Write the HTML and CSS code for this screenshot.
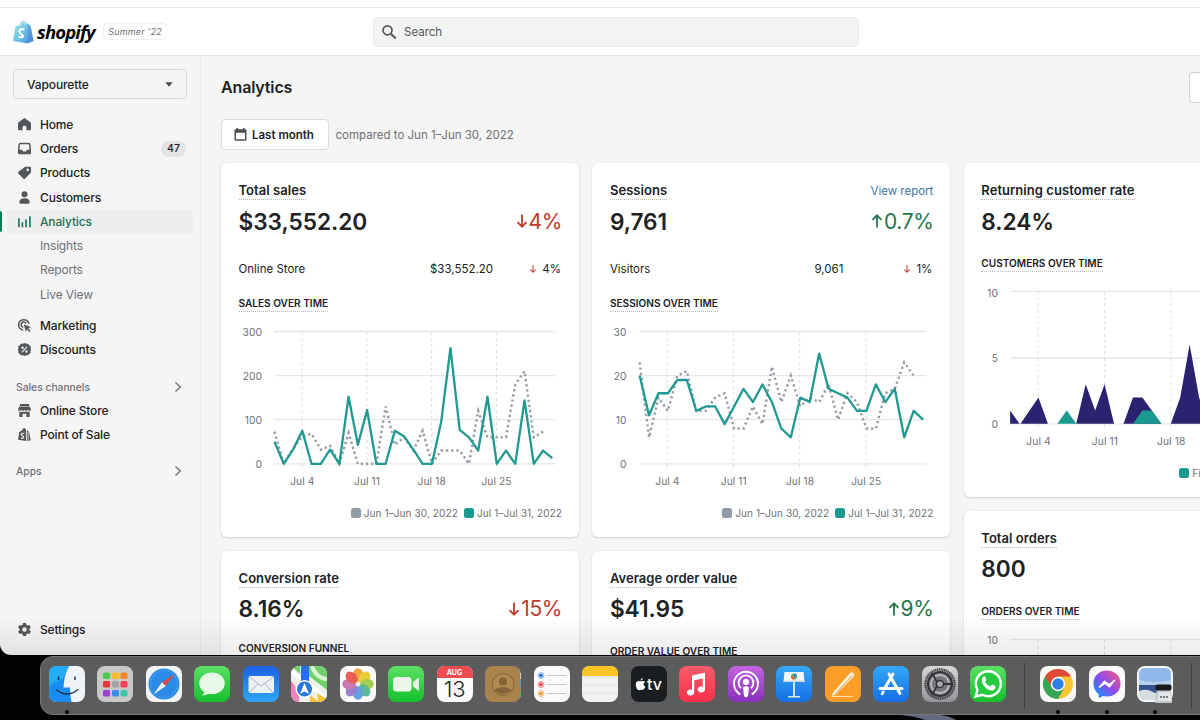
FILE: index.html
```html
<!DOCTYPE html>
<html lang="en">
<head>
<meta charset="utf-8">
<title>Vapourette · Analytics · Shopify</title>
<link rel="stylesheet" href="styles.css">
</head>
<body>
<div class="window">
  <div class="tabstrip"></div>
  <header class="topbar">
    <div class="brand">
      <svg class="bag" viewBox="0 0 21 24">
        <defs><linearGradient id="bagg" x1="0" y1="0" x2="1" y2="1"><stop offset="0" stop-color="#9be6cf"/><stop offset=".5" stop-color="#6ec3e6"/><stop offset="1" stop-color="#4a80d8"/></linearGradient></defs>
        <path d="M2.500 6.500 6 5.500C7 2.500 9 1 10.500 1c1.300 0 2 1 2.300 2.500L15 3.300l2.500 2.500L20.500 21 14.500 23.500 0 21z" fill="url(#bagg)"/>
        <path d="M14.800 4v19.300l5.700-2.300-3-15.200-1.500-.2z" fill="#4a8ad6" opacity=".5"/>
        <path d="M7.500 6c.5-2 1.700-3.300 2.800-3.500 1 0 1.300 1.500 1.300 3" fill="none" stroke="#c9f3ee" stroke-width=".8"/>
        <path d="M11.300 9.600c-2.500-1.300-5-.3-5 1.900 0 2.600 3.600 2.500 3.600 4.600 0 1.800-2.400 1.800-4.300.5" fill="none" stroke="#fff" stroke-width="2.200"/>
      </svg>
      <span class="wordmark">shopify</span>
      <span class="edition">Summer ’22</span>
    </div>
    <div class="search">
      <svg class="search-icon" viewBox="0 0 16 16"><circle cx="6.500" cy="6.300" r="4.500" fill="none" stroke="#55585b" stroke-width="1.700"/><path d="m9.800 9.700 5 4.800" stroke="#55585b" stroke-width="2"/></svg>
      <span>Search</span>
    </div>
  </header>
  <div class="body">
    <aside class="sidebar">
      <div class="store"><span>Vapourette</span><svg class="caret" viewBox="0 0 8 5"><path d="M.3.3h7.400L4 4.700z" fill="#4a4d50"/></svg></div>
      <nav class="nav">
        <a class="item"><svg class="ico" viewBox="0 0 20 20"><path d="M10 0 19 6.500Q20 7.300 20 8.500V17q0 2-2 2h-5v-5q0-2-3-2t-3 2v5H2q-2 0-2-2V8.500Q0 7.300 1 6.500z"/></svg><span>Home</span></a>
        <a class="item"><svg class="ico" viewBox="0 0 20 20"><path fill-rule="evenodd" d="M4 1h12q3 0 3.300 3L20 12v5q0 2-2 2H2q-2 0-2-2v-5L.7 4Q1 1 4 1zm0 2.500q-1 0-1.200 1L2.500 12H6l2 2.500h4l2-2.500h3.500l-.3-7.500q-.2-1-1.200-1z"/></svg><span>Orders</span><b class="badge">47</b></a>
        <a class="item"><svg class="ico" viewBox="0 0 20 20"><path fill-rule="evenodd" d="M11 1h7q2 0 2 2v7L11 19.300q-1.500 1.200-3 0L.8 12q-1.500-1.500 0-3zm4 3a2 2 0 1 0 .1 0z"/></svg><span>Products</span></a>
        <a class="item"><svg class="ico" viewBox="0 0 20 20"><circle cx="10" cy="5" r="4.600"/><path d="M2 17q0-6 8-6t8 6q0 2.500-2 2.500H4q-2 0-2-2.500z"/></svg><span>Customers</span></a>
        <a class="item active"><svg class="ico" viewBox="0 0 20 20"><path d="M0 5h2.600v14H0zM5.500 11h2.600v8H5.500zM11 7h2.600v12H11zM17 2h2.600v17H17z"/></svg><span>Analytics</span></a>
        <a class="item sub"><span>Insights</span></a>
        <a class="item sub"><span>Reports</span></a>
        <a class="item sub"><span>Live View</span></a>
        <a class="item gap"><svg class="ico" viewBox="0 0 20 20"><g fill="none" stroke="#54575a" stroke-width="2.400"><path d="M16.800 7.500A8 8 0 1 0 8 17"/><path d="M12.500 7A4 4 0 1 0 8 12.500"/></g><path d="m9 8 11 4.500-4.500 1.800 4 4-1.700 1.600-4-4L12 20z"/></svg><span>Marketing</span></a>
        <a class="item"><svg class="ico" viewBox="0 0 20 20"><path d="m10 0 2.500 1.300 3-.3 1.500 2.300 2.500 1.500L19.300 8l.9 2-.9 2.500.2 3L17 17l-1.500 2-3-.3L10 20l-2.500-1.300-3 .3L3 17 .5 15.500l.2-3L-.2 10l.9-2-.2-3.200L3 3.300 4.500 1l3 .3z"/><g stroke="#f5f5f5" stroke-width="1.700"><path d="m6 14.500 8-9"/><circle cx="7" cy="7.300" r="1" fill="#f5f5f5"/><circle cx="13" cy="13" r="1" fill="#f5f5f5"/></g></svg><span>Discounts</span></a>
        <div class="group"><span>Sales channels</span><svg class="chev" viewBox="0 0 8 12"><path d="m1.500 1.500 4.700 4.500-4.700 4.500"/></svg></div>
        <a class="item chan"><svg class="ico" viewBox="0 0 20 20"><path d="M3 0h14v3H3zM2 4h16l2 4q0 2.500-2.500 2.500T15 8.500q0 2-2.500 2T10 8.500q0 2-2.500 2T5 8.500q0 2-2.500 2T0 8zM2 12h16v8h-5v-5H7v5H2z"/></svg><span>Online Store</span></a>
        <a class="item chan"><svg class="ico" viewBox="0 0 20 20"><path d="M2 6 6 4q1-4 4-4 2 0 2.500 4v16L0 18zM14 3l3 3 2.500 13-5.500 1z"/><path d="M9.800 8.500Q5.500 7 5 9.700q0 1.500 2.300 2.500 2.200 1.300 1 3Q7 16.500 4.500 15" fill="none" stroke="#f5f5f5" stroke-width="1.700"/><path d="M15.700 6v13" stroke="#f5f5f5" stroke-width="1"/></svg><span>Point of Sale</span></a>
        <div class="group"><span>Apps</span><svg class="chev" viewBox="0 0 8 12"><path d="m1.500 1.500 4.700 4.500-4.700 4.500"/></svg></div>
      </nav>
      <a class="item settings"><svg class="ico" viewBox="0 0 20 20"><path fill-rule="evenodd" d="M7.700 0h4.600l.7 3 1.500.8 3-.9 2.300 4L17.600 9v2l2.200 2.100-2.300 4-3-.9-1.500.8-.7 3H7.700l-.7-3-1.500-.8-3 .9-2.300-4L2.400 11V9L.2 6.900l2.300-4 3 .9L7 3zM10 6.500a3.500 3.500 0 1 0 .1 0z"/></svg><span>Settings</span></a>
    </aside>

    <main class="main">
      <div class="heading"><h1>Analytics</h1><div class="more"></div></div>
      <div class="filter">
        <div class="range"><svg class="cal" viewBox="0 0 13 13"><path fill-rule="evenodd" d="M2.500 0h1.600v1.300h4.800V0h1.600v1.300h.8q1.200 0 1.200 1.200v9q0 1.200-1.200 1.200H1.700Q.5 12.700.5 11.500v-9q0-1.200 1.200-1.200h.8zM2 4.800v6.400h9V4.800z" fill="#4c4f52"/></svg><span>Last month</span></div>
        <span class="compare">compared to Jun 1–Jun 30, 2022</span>
      </div>
      <div class="columns">
        <div class="col">
          <section class="card tall">
            <div class="row title"><h2>Total sales</h2></div>
            <div class="row value"><strong>$33,552.20</strong><span class="delta down"><svg class="arr" viewBox="0 0 12 14"><path d="M6 .5v12M1.500 8.200 6 12.700l4.500-4.500"/></svg>4%</span></div>
            <div class="row detail"><span>Online Store</span><span class="num">$33,552.20</span><span class="mini"><svg class="arr" viewBox="0 0 12 14"><path d="M6 .5v12M1.500 8.200 6 12.700l4.500-4.500"/></svg>4%</span></div>
            <div class="row caption"><h3>Sales over time</h3></div>
            <svg class="chart" viewBox="239 320 323 175">
              <path class="grid" d="M274 331.500h281M274 375.700h281M274 419.700h281M274 463.800h281"/>
              <path class="vgrid" d="M302.200 332v136M366.900 332v136M431.600 332v136M496.500 332v136"/>
              <g transform="translate(274.500 463.800) scale(9.260 -.441)">
                <polyline class="prev" points="0,73 1,0 2,35 3,62 4,68 5,32 6,41 7,0 8,70 9,0 10,0 11,0 12,130 13,43 14,60 15,30 16,75 17,0 18,30 19,30 20,30 21,0 22,120 23,60 24,60 25,60 26,180 27,210 28,60 29,73"/>
                <polyline class="cur" points="0,50 1,0 2,32 3,75 4,0 5,0 6,32 7,0 8,152 9,43 10,122 11,0 12,0 13,75 14,62 15,32 16,0 17,0 18,95 19,262 20,77 21,60 22,30 23,152 24,0 25,30 26,0 27,144 28,0 29,30 30,13"/>
              </g>
              <g class="ylab"><text x="262" y="336">300</text><text x="262" y="380">200</text><text x="262" y="424">100</text><text x="262" y="468">0</text></g>
              <g class="xlab"><text x="302.300" y="485">Jul 4</text><text x="367" y="485">Jul 11</text><text x="431.700" y="485">Jul 18</text><text x="496.500" y="485">Jul 25</text></g>
            </svg>
            <div class="legend"><span><i class="sw grey"></i>Jun 1–Jun 30, 2022</span><span><i class="sw teal"></i>Jul 1–Jul 31, 2022</span></div>
          </section>
          <section class="card">
            <div class="row title"><h2>Conversion rate</h2></div>
            <div class="row value"><strong>8.16%</strong><span class="delta down"><svg class="arr" viewBox="0 0 12 14"><path d="M6 .5v12M1.500 8.200 6 12.700l4.500-4.500"/></svg>15%</span></div>
            <div class="row caption funnel"><h3>Conversion funnel</h3></div>
          </section>
        </div>
        <div class="col">
          <section class="card tall">
            <div class="row title"><h2>Sessions</h2><a class="link">View report</a></div>
            <div class="row value"><strong>9,761</strong><span class="delta up"><svg class="arr" viewBox="0 0 12 14"><path d="M6 13.500v-12M1.500 5.800 6 1.300l4.500 4.500"/></svg>0.7%</span></div>
            <div class="row detail"><span>Visitors</span><span class="num n2">9,061</span><span class="mini"><svg class="arr" viewBox="0 0 12 14"><path d="M6 .5v12M1.500 8.200 6 12.700l4.500-4.500"/></svg>1%</span></div>
            <div class="row caption"><h3>Sessions over time</h3></div>
            <svg class="chart" viewBox="610.500 320 323 175">
              <path class="grid" d="M640 331.500h287M640 375.700h287M640 419.700h287M640 463.800h287"/>
              <path class="vgrid" d="M667.600 332v136M733.900 332v136M800.200 332v136M866.500 332v136"/>
              <g transform="translate(640.100 463.800) scale(9.450 -4.410)">
                <polyline class="prev" points="0,23 1,6 2,15 3,12 4,20 5,21 6,12 7,12 8,15 9,16 10,8 11,8 12,13 13,9 14,22 15,14 16,20 17,13 18,15 19,14 20,18 21,10 22,16 23,14 24,8 25,8 26,16 27,17 28,23 29,20"/>
                <polyline class="cur" points="0,20 1,11 2,16 3,16 4,19 5,19 6,12 7,13 8,13 9,9 10,13 11,17 12,14 13,18 14,14 15,8 16,6 17,15 18,14 19,25 20,17 21,16 22,15 23,12 24,12 25,18 26,14 27,17 28,6 29,12 30,10"/>
              </g>
              <g class="ylab"><text x="627" y="336">30</text><text x="627" y="380">20</text><text x="627" y="424">10</text><text x="627" y="468">0</text></g>
              <g class="xlab"><text x="667.900" y="485">Jul 4</text><text x="734.300" y="485">Jul 11</text><text x="800.500" y="485">Jul 18</text><text x="866.800" y="485">Jul 25</text></g>
            </svg>
            <div class="legend"><span><i class="sw grey"></i>Jun 1–Jun 30, 2022</span><span><i class="sw teal"></i>Jul 1–Jul 31, 2022</span></div>
          </section>
          <section class="card">
            <div class="row title"><h2>Average order value</h2></div>
            <div class="row value"><strong>$41.95</strong><span class="delta up"><svg class="arr" viewBox="0 0 12 14"><path d="M6 13.500v-12M1.500 5.800 6 1.300l4.500 4.500"/></svg>9%</span></div>
            <div class="row caption near"><h3>Order value over time</h3></div>
          </section>
        </div>
        <div class="col">
          <section class="card mid">
            <div class="row title"><h2>Returning customer rate</h2></div>
            <div class="row value"><strong>8.24%</strong></div>
            <div class="row caption near"><h3>Customers over time</h3></div>
            <svg class="chart" viewBox="981.500 280.500 323 175">
              <path class="grid" d="M1011 291.800h287M1011 358.500h287M1011 424.300h287"/>
              <path class="vgrid" d="M1038.700 292v136M1105 292v136M1171.300 292v136"/>
              <g transform="translate(1010.600 424.300) scale(9.450 -13.200)">
                <polygon fill="#2b2270" points="0,0 0,1 1,0"/>
                <polygon fill="#2b2270" points="1.100,0 3,2 4,0"/>
                <polygon fill="#2b2270" points="7,0 8,3 9,1 10,3 11,0"/>
                <polygon fill="#2b2270" points="12,0 13,2 14,2 16,0"/>
                <polygon fill="#2b2270" points="17,0 18,2 19,6 20,2 21,0"/>
                <polygon fill="#1a9a90" points="5,0 6,1 7,0"/>
                <polygon fill="#1a9a90" points="13,0 14,1 15,1 16,0"/>
              </g>
              <g class="ylab"><text x="998.500" y="297">10</text><text x="998.500" y="362.500">5</text><text x="998.500" y="428.500">0</text></g>
              <g class="xlab"><text x="1039" y="445">Jul 4</text><text x="1105.400" y="445">Jul 11</text><text x="1171.700" y="445">Jul 18</text></g>
            </svg>
            <div class="legend left"><span><i class="sw teal"></i>First-time</span></div>
          </section>
          <section class="card">
            <div class="row title"><h2>Total orders</h2></div>
            <div class="row value"><strong>800</strong></div>
            <div class="row caption near"><h3>Orders over time</h3></div>
            <svg class="chart" viewBox="981.500 628 323 175">
              <path class="grid" d="M1011 639.500h287"/>
              <path class="vgrid" d="M1038.700 640v136M1105 640v136M1171.300 640v136"/>
              <g class="ylab"><text x="998.500" y="644">10</text></g>
            </svg>
          </section>
        </div>
      </div>
    </main>
  </div>
  <div class="shade"></div>
</div>

<div class="desk">
  <svg class="wall" viewBox="0 0 280 5" preserveAspectRatio="none"><path d="M0 0h40q10 1 16 5H25Q15 1 0 0z" fill="#626880"/></svg>
  <div class="dock">
    <div class="app on"><svg viewBox="0 0 36 36"><rect width="36" height="36" rx="8" fill="#eef3f8"/><path d="M8 0h12q-5 9-5.500 21.500H21q0 8 1.500 14.500H8q-8 0-8-8V8q0-8 8-8z" fill="#1b8cf2"/><path d="M8 0h12q-3 5-4.300 11L0 20V8q0-8 8-8z" fill="#28b4f5" opacity=".8"/><path d="M9.500 10.500v3.500M26 10.500v3.500" stroke="#17314f" stroke-width="1.400"/><path d="M7 23.500q11 9 22 0" fill="none" stroke="#17314f" stroke-width="1.300"/></svg></div>
    <div class="app"><svg viewBox="0 0 36 36"><rect width="36" height="36" rx="8" fill="#c9c8c6"/><g><rect x="6" y="6.500" width="7" height="6.500" rx="1.500" fill="#4ccb4b"/><rect x="15" y="6.500" width="7" height="6.500" rx="1.500" fill="#fcb927"/><rect x="23.500" y="6.500" width="7" height="6.500" rx="1.500" fill="#f0882b"/><rect x="6" y="15" width="7" height="6.500" rx="1.500" fill="#e23a3c"/><rect x="15" y="15" width="7" height="6.500" rx="1.500" fill="#a3a6a7"/><rect x="23.500" y="15" width="7" height="6.500" rx="1.500" fill="#f3415c"/><rect x="6" y="24" width="7" height="6.500" rx="1.500" fill="#9a3fcf"/><rect x="15" y="24" width="7" height="6.500" rx="1.500" fill="#3b8eef"/><rect x="23.500" y="24" width="7" height="6.500" rx="1.500" fill="#3fc4ac"/></g></svg></div>
    <div class="app"><svg viewBox="0 0 36 36"><rect width="36" height="36" rx="8" fill="#f1f3f5"/><circle cx="18" cy="18" r="15.500" fill="#2a8be6"/><circle cx="18" cy="18" r="13.500" fill="none" stroke="#6db2f0" stroke-width="1.300" stroke-dasharray=".7 1.400"/><path d="M28.500 8 16 16.200l3.800 3.700z" fill="#e1473d"/><path d="M7.500 28.500 16 16.200l3.800 3.700z" fill="#f4f6f8"/></svg></div>
    <div class="app"><svg viewBox="0 0 36 36"><defs><linearGradient id="gr" x2="0" y2="1"><stop stop-color="#5ce065"/><stop offset="1" stop-color="#15bf2c"/></linearGradient></defs><rect width="36" height="36" rx="8" fill="url(#gr)"/><ellipse cx="18" cy="17.300" rx="12.800" ry="10.800" fill="#e7f9e6"/><path d="M10 24q1 3-2.500 5.500 5 0 8-2.500z" fill="#e0f5df"/></svg></div>
    <div class="app"><svg viewBox="0 0 36 36"><defs><linearGradient id="bl" x2="0" y2="1"><stop stop-color="#1c62e6"/><stop offset="1" stop-color="#2fa5f5"/></linearGradient></defs><rect width="36" height="36" rx="8" fill="url(#bl)"/><rect x="5.500" y="10" width="25.500" height="17" rx="2" fill="#eef1f4"/><path d="m6.500 11 11.700 9L30 11M6.500 26.500l8.500-9M30 26.500l-8.500-9" fill="none" stroke="#aab0b7" stroke-width="1"/></svg></div>
    <div class="app"><svg viewBox="0 0 36 36"><defs><clipPath id="c"><rect width="36" height="36" rx="8"/></clipPath></defs><g clip-path="url(#c)"><path fill="#eef0ea" d="M0 0h36v36H0z"/><path d="M18 0h18v24L18 10z" fill="#71d069"/><path d="M21 0q4 12 15 13" fill="none" stroke="#d8f2d2" stroke-width="4"/><path d="M0 5 36 32" stroke="#fff" stroke-width="4"/><path d="M0 15q9 8 8 21H0z" fill="#ee83bd"/><path d="m19 29 9 7h-9zM26 27l10 6v3h-9z" fill="#f7c437"/><path d="M10 0h8v20h-8z" fill="#2671e2"/><path d="M0 0h9v8z" fill="#6fd06a"/><circle cx="13.500" cy="23" r="9" fill="#fff"/><circle cx="13.500" cy="23" r="7.600" fill="#2877e4"/><path d="m13.500 17 4.600 11-4.600-2.500L9 28z" fill="#fff"/></g></svg></div>
    <div class="app"><svg viewBox="0 0 36 36"><rect width="36" height="36" rx="8" fill="#fcfcfb"/><g transform="translate(18 18)" opacity=".9"><ellipse cy="-9" rx="5.200" ry="6.800" fill="#f59b25"/><ellipse cy="-9" rx="5.200" ry="6.800" fill="#e6c928" transform="rotate(45)"/><ellipse cy="-9" rx="5.200" ry="6.800" fill="#9bc83d" transform="rotate(90)"/><ellipse cy="-9" rx="5.200" ry="6.800" fill="#4db18b" transform="rotate(135)"/><ellipse cy="-9" rx="5.200" ry="6.800" fill="#5199dc" transform="rotate(180)"/><ellipse cy="-9" rx="5.200" ry="6.800" fill="#8d76c8" transform="rotate(225)"/><ellipse cy="-9" rx="5.200" ry="6.800" fill="#c969a8" transform="rotate(270)"/><ellipse cy="-9" rx="5.200" ry="6.800" fill="#e94c42" transform="rotate(315)"/></g></svg></div>
    <div class="app"><svg viewBox="0 0 36 36"><rect width="36" height="36" rx="8" fill="url(#gr)"/><rect x="5" y="11" width="18.500" height="14.500" rx="3.500" fill="#e9f8e9"/><path d="m25 16 5-4q1-.5 1 .5V24q0 1-1 .5l-5-4z" fill="#e0f3e0"/></svg></div>
    <div class="app cal-app"><b>AUG</b><span>13</span></div>
    <div class="app"><svg viewBox="0 0 36 36"><rect width="36" height="36" rx="8" fill="#a9824c"/><path d="M35.500 7v6" stroke="#c5c9c5"/><path d="M35.500 14v7" stroke="#5a9bd1"/><path d="M35.500 25v6" stroke="#50b869"/><circle cx="18" cy="18.500" r="11" fill="#b18a50" stroke="#836337"/><circle cx="18" cy="15.500" r="4" fill="#836337"/><path d="M9 24q9-6 18 0-9 8-18 0z" fill="#836337"/></svg></div>
    <div class="app"><svg viewBox="0 0 36 36"><rect width="36" height="36" rx="8" fill="#fafafa"/><path d="M13 9.500h19M13 18.500h19M13 27.500h19" stroke="#c5c6c8"/><g stroke-width="1" fill="#fff"><circle cx="7" cy="9.500" r="3" stroke="#8bb8ea"/><circle cx="7" cy="18.500" r="3" stroke="#ec9294"/><circle cx="7" cy="27.500" r="3" stroke="#f0bd7d"/></g><circle cx="7" cy="9.500" r="2" fill="#2878d6"/><circle cx="7" cy="18.500" r="2" fill="#e44c50"/><circle cx="7" cy="27.500" r="2" fill="#f09a34"/></svg></div>
    <div class="app"><svg viewBox="0 0 36 36"><rect width="36" height="36" rx="8" fill="#f3f2f0"/><path d="M0 10V8q0-8 8-8h20q8 0 8 8v2z" fill="#fbc623"/><path d="M0 11h36" stroke="#cfc7b4" stroke-dasharray="1 1"/><path d="M0 19h36M0 27h36" stroke="#e4e3e1"/></svg></div>
    <div class="app tv-app"><svg class="apple" viewBox="0 0 11 13"><path d="M8.500 6.500q0-1.700 1.600-2.500Q8.800 2.500 7.300 3q-1.500.6-2.700 0Q2 2.600 1 4.500 0 7 1.700 10.500q1.300 2.200 3 1.500 1-.5 2.200 0 1.900.5 3.500-3.200-1.900-.7-1.900-2.300zM5.500 2.600Q5.600.5 7.800 0 8 2 5.500 2.600z" fill="#fff"/></svg><span>tv</span></div>
    <div class="app"><svg viewBox="0 0 36 36"><defs><linearGradient id="mu" x2="0" y2="1"><stop stop-color="#fb5b6c"/><stop offset="1" stop-color="#f9304b"/></linearGradient></defs><rect width="36" height="36" rx="8" fill="url(#mu)"/><path d="M13 9.500 26 6.700v16.800a3.700 3 0 1 1-2.200-2.800v-8.300l-8.600 1.900v12.200A3.700 3 0 1 1 13 23.700z" fill="#fff"/></svg></div>
    <div class="app"><svg viewBox="0 0 36 36"><defs><linearGradient id="po" x2="0" y2="1"><stop stop-color="#c663e0"/><stop offset="1" stop-color="#8730bd"/></linearGradient></defs><rect width="36" height="36" rx="8" fill="url(#po)"/><g fill="none" stroke="#fff" stroke-width="1.900"><path d="M12.300 28.300a12 12 0 1 1 11.400 0M13 22.200a7.400 7.400 0 1 1 10 0"/></g><circle cx="18" cy="16" r="3.100" fill="#fff"/><path d="M15 21.500q3-2.500 6 0l-1 8.500q-2 2.500-4 0z" fill="#fff"/></svg></div>
    <div class="app"><svg viewBox="0 0 36 36"><defs><linearGradient id="ke" x2="0" y2="1"><stop stop-color="#33a9f5"/><stop offset="1" stop-color="#176ee5"/></linearGradient></defs><rect width="36" height="36" rx="8" fill="url(#ke)"/><path d="M8.500 6h19l1 10h-21z" fill="#f3f5f7"/><path d="M7.500 14.500h21v1.500h-21z" fill="#cdd7df"/><circle cx="18" cy="10.500" r="3" fill="#53b269"/><path d="M18 7.500a3 3 0 0 1 3 3h-3z" fill="#3979dc"/><path d="M18 13.500a3 3 0 0 1-3-3h3z" fill="#e55c41"/><path d="M17.200 16h1.600v14h-1.600z" fill="#fff"/><path d="M12 30h12v1.500H12z" fill="#d9ecfa"/></svg></div>
    <div class="app"><svg viewBox="0 0 36 36"><rect width="36" height="36" rx="8" fill="#fb9d28"/><path d="M7 30.500h21" stroke="#ffe0a7" stroke-width="1"/><path d="M8 26.500 24.500 7.500q2-2 3.800-.7t.7 3.500L11 28.300 7 30z" fill="#fff0d6"/><path d="m10.500 27.500 17-18" stroke="#d1a167" stroke-width="1"/></svg></div>
    <div class="app"><svg viewBox="0 0 36 36"><rect width="36" height="36" rx="8" fill="url(#ke)"/><g stroke="#fff" stroke-width="3" stroke-linecap="round"><path d="m20 8-8.700 15M16 8l11 19.500M7 22.500h14.500M26 22.500h3M10 26.300l-.8 1.300"/></g></svg></div>
    <div class="app"><svg viewBox="0 0 36 36"><defs><linearGradient id="se" x2="0" y2="1"><stop stop-color="#d6d7d9"/><stop offset="1" stop-color="#929396"/></linearGradient></defs><rect width="36" height="36" rx="8" fill="url(#se)"/><circle cx="18" cy="18" r="14.500" fill="none" stroke="#3d3e41" stroke-width="2.500" stroke-dasharray="1.200 .6"/><circle cx="18" cy="18" r="12" fill="#77787b" stroke="#303135" stroke-width="2"/><circle cx="18" cy="18" r="9" fill="none" stroke="#b9babc" stroke-width="1.800"/><circle cx="18" cy="18" r="3.600" fill="#a9aaad" stroke="#303135" stroke-width="1.500"/><path d="m15 16-5-9M21.500 18H30M15 20l-5 9" stroke="#303135" stroke-width="1.800"/></svg></div>
    <div class="app"><svg viewBox="0 0 36 36"><rect width="36" height="36" rx="8" fill="url(#gr)"/><path d="M5.500 30.500 7.500 24A12.500 12.500 0 1 1 12.500 28.800z" fill="#25ca3e" stroke="#fff" stroke-width="2.400"/><path d="M12.700 11q2-1.500 2.700.2l1 2.600-1.400 2q2 3.500 5.300 4.600l1.800-1.900 3.200 1.500q.7 3.500-2.900 4.500-4 .5-8-4-4.300-4.600-1.700-9.500z" fill="#fff"/></svg></div>
    <i class="sep"></i>
    <div class="app on"><svg viewBox="0 0 36 36"><rect width="36" height="36" rx="8" fill="#f8f8f7"/><g transform="translate(18 18)"><circle r="15" fill="#fbc633"/><path d="M-13-7.500A15 15 0 0 1 13-7.500H0L-6 3.500z" fill="#df4837"/><path d="M-13-7.500A15 15 0 0 0 0 15L6.500 3.500-6 3.500z" fill="#35a557"/><circle r="7.200" fill="#fff"/><circle r="5.700" fill="#2f7de5"/></g></svg></div>
    <div class="app on"><svg viewBox="0 0 36 36"><defs><linearGradient id="ms" x1="0" y1="1" x2="1" y2="0"><stop offset=".1" stop-color="#168ff9"/><stop offset=".5" stop-color="#9149e9"/><stop offset="1" stop-color="#fa5c7c"/></linearGradient></defs><rect width="36" height="36" rx="8" fill="#fafafc"/><path d="M18 4.500c8 0 13.500 5.500 13.500 13S26 30.500 18 30.500l-4-.5-4 2-.5-4C6 25.500 4.500 21.500 4.500 17.500 4.500 10 10 4.500 18 4.500z" fill="url(#ms)"/><path d="m10 21.500 5.500-6.500 4.500 3.500 6-4.500-5.500 7-4.500-3.500z" fill="#fff" stroke="#fff" stroke-width="1.200"/></svg></div>
    <div class="app on"><svg viewBox="0 0 36 36"><rect width="36" height="36" rx="8" fill="#f5f7f8"/><path d="M2 8q0-6 6-6h20q6 0 6 6v12H2z" fill="#8fb9eb"/><path d="M2 14q16 4 32 0v7H2z" fill="#b5d0ed"/><path d="M2 19h32v8H2z" fill="#34548c"/><path d="M2 25q8-3 14 1t18 0v2q0 6-6 6H8q-6 0-6-6z" fill="#d6dbe0"/><path d="M20 22h14l1 15H18z" fill="#c3c7c9"/><rect x="18.500" y="18.500" width="16" height="6" rx="2" fill="#17191b"/><path d="m20 35 1.500-9H33l2 9z" fill="#e3e6e6"/><path d="M23 31h8" stroke="#777" stroke-width="2" stroke-dasharray="2 1"/></svg></div>
    <i class="sep"></i>
  </div>
</div>
</body>
</html>
```
FILE: styles.css
```css
* { box-sizing: border-box; }
body { margin: 0; width: 1200px; height: 720px; overflow: hidden; background: #030303; color: #202223; font-family: Inter, "Liberation Sans", sans-serif; font-size: 11.500px; display: flex; flex-direction: column; }
h1, h2, h3 { margin: 0; font-weight: 600; }
svg { display: block; overflow: visible; flex: none; }

.window { position: relative; height: 655px; flex: none; overflow: hidden; background: #f5f5f5; border-bottom-left-radius: 11px; display: flex; flex-direction: column; }
.tabstrip { height: 8px; flex: none; background: #fdfdfd; border-bottom: 1px solid #e9e9e9; }
.topbar { height: 48px; flex: none; background: #fff; border-bottom: 1px solid #e1e2e3; display: flex; align-items: center; }
.brand { width: 360px; padding-left: 13px; display: flex; align-items: center; }
.bag { width: 21px; height: 24px; }
.wordmark { margin-left: 3px; padding-top: 1px; width: 61px; font: italic 700 18.500px/26px "Open Sans", sans-serif; letter-spacing: -.850px; color: #050505; }
.edition { margin-left: 5px; width: 64px; height: 17px; border: 1px solid #f0f0f0; border-radius: 4px; font-size: 9px; line-height: 16px; font-style: italic; color: #6d7073; text-align: center; letter-spacing: .2px; white-space: nowrap; }
.search { margin-left: 13px; width: 486px; height: 30px; border: 1px solid #eceded; border-radius: 4px; background: #f2f3f3; display: flex; align-items: center; gap: 7px; padding-left: 7px; color: #55585b; }
.search-icon { width: 16px; height: 16px; }

.body { flex: 1; min-height: 0; display: flex; }
.sidebar { width: 201px; flex: none; border-right: 1px solid #ebebeb; padding-top: 13px; display: flex; flex-direction: column; }
.store { margin: 0 0 13px 13px; width: 174px; height: 30px; flex: none; border: 1px solid #d5d6d7; border-radius: 4px; padding: 0 13px; display: flex; align-items: center; justify-content: space-between; font-size: 12px; letter-spacing: -.1px; font-weight: 500; }
.caret { width: 8px; height: 5px; }
.nav { flex: 1; }
.item { height: 24.400px; margin-right: 7px; padding-left: 18px; display: flex; align-items: center; gap: 9px; font-size: 12px; font-weight: 500; letter-spacing: -.17px; }
.ico { width: 13px; height: 13px; fill: #54575a; }
.badge { margin-left: auto; margin-right: 7px; width: 25px; height: 16px; border-radius: 8px; background: #e2e3e4; font-size: 10.500px; line-height: 16px; font-weight: 500; text-align: center; letter-spacing: 0; }
.active { position: relative; height: 23.500px; margin-left: 7px; padding-left: 11px; border-radius: 3px; background: #edeeef; color: #1c6f57; }
.active::before { content: ""; position: absolute; left: -7px; top: 1px; width: 2px; height: 21px; border-radius: 0 2px 2px 0; background: #0d7a57; }
.active .ico { fill: #1c7a5e; }
.sub { padding-left: 40px; color: #6d7175; font-weight: 400; }
.gap { margin-top: 7px; }
.group { height: 22px; margin: 14px 18px 1px 16px; display: flex; align-items: center; justify-content: space-between; font-size: 10.300px; color: #6d7175; font-weight: 500; }
.chev { width: 8px; height: 12px; fill: none; stroke: #74777a; stroke-width: 1.500; }
.chan { height: 23.500px; }
.settings { margin-bottom: 13px; flex: none; }

.main { flex: 1; min-width: 0; overflow: hidden; padding: 16px 0 0 20px; }
.heading { height: 31px; display: flex; justify-content: space-between; align-items: center; }
h1 { font-size: 16px; line-height: 31px; letter-spacing: -.15px; }
.more { width: 11px; height: 31px; border: 1px solid #cfd0d2; border-right: 0; border-radius: 4px 0 0 4px; background: #fff; }
.filter { margin-top: 16px; height: 31px; display: flex; align-items: center; gap: 6.500px; color: #6d7175; }
.range { width: 108px; height: 31px; border: 1px solid #dadbdc; border-radius: 4px; background: #fff; display: flex; align-items: center; gap: 5px; padding-left: 12px; color: #202223; font-weight: 600; white-space: nowrap; }
.cal { width: 13px; height: 13px; }
.columns { margin-top: 13px; width: 1110px; display: flex; gap: 13.400px; }
.col { width: 358px; flex: none; display: flex; flex-direction: column; gap: 13.500px; }
.card { height: 334px; border-radius: 6px; background: #fff; box-shadow: 0 1px 2px #0002, 0 0 2px #0001; padding: 18px 17px 0 17.500px; display: flex; flex-direction: column; }
.tall { height: 374px; }
.row { display: flex; align-items: center; justify-content: space-between; flex: none; }
.title { height: 20px; }
h2 { font-size: 13px; line-height: 17px; letter-spacing: .05px; border-bottom: 1px dotted #bbb; }
.link { color: #3c76a8; }
.value { height: 42px; margin: -1px 0 1px; }
.value strong { font-size: 22.700px; font-weight: 600; letter-spacing: -.05px; }
.delta { font-size: 21px; display: flex; align-items: center; gap: 1px; letter-spacing: -.4px; }
.arr { width: 12px; height: 14px; fill: none; stroke: currentColor; stroke-width: 1.800; }
.down { color: #c0392d; }
.up { color: #25764f; }
.detail { height: 50px; padding: 1px 1px 0 0; }
.num { width: 66px; margin-left: auto; text-align: right; }
.num.n2 { width: auto; }
.mini { width: 68px; display: flex; align-items: center; justify-content: flex-end; gap: 5px; }
.n2 + .mini { width: 89px; }
.mini .arr { width: 8px; height: 8px; color: #c0392d; }
.caption { height: 22px; margin-bottom: 5px; }
.near { height: 42px; margin-bottom: -5px; }
.funnel { height: 37px; }
h3 { font-size: 10.100px; line-height: 15px; text-transform: uppercase; border-bottom: 1px dotted #bbb; }
.chart { width: 323px; height: 175px; }
.grid { fill: none; stroke: #e6e7e8; stroke-width: 1.300; }
.vgrid { fill: none; stroke: #dedfe0; stroke-dasharray: 3 3; }
.prev, .cur { fill: none; vector-effect: non-scaling-stroke; }
.prev { stroke: #949aa3; stroke-width: 2.400; stroke-dasharray: 2.200 3; }
.cur { stroke: #1f9991; stroke-width: 2.300; stroke-linejoin: round; }
.chart text { font-size: 10.200px; fill: #6d7175; letter-spacing: .1px; }
.ylab { text-anchor: end; }
.xlab { text-anchor: middle; }
.legend { height: 36px; display: flex; align-items: center; justify-content: flex-end; gap: 6px; font-size: 10px; letter-spacing: .1px; color: #6d7175; white-space: nowrap; }
.legend span { display: flex; align-items: center; gap: 3px; }
.legend.left { justify-content: flex-start; padding-left: 198px; }
.sw { width: 10px; height: 10px; border-radius: 2.500px; }
.grey { background: #919ba6; }
.teal { background: #1a9a90; }
.shade { position: absolute; left: 0; right: 0; bottom: 0; height: 38px; background: linear-gradient(#0000, #00000014); }

.desk { position: relative; flex: 1; padding: 1px 0 0 40px; }
.wall { position: absolute; left: 900px; bottom: 0; width: 280px; height: 5px; }
.dock { width: 1210px; height: 59px; border: 1px solid #777; border-radius: 13px; background: #5c5c5d; display: flex; align-items: flex-start; padding: 9px 0 0 7.500px; gap: 12.500px; }
.app { position: relative; width: 36px; height: 36px; flex: none; }
.app > svg:first-child { width: 36px; height: 36px; }
.on::after { content: ""; position: absolute; left: 16px; top: 43.500px; width: 4px; height: 4px; border-radius: 50%; background: #080808; }
.sep { width: 1px; height: 45px; margin: -3px 3px 0 5px; flex: none; background: #3e3e3f; }
.cal-app { border-radius: 8px; overflow: hidden; background: #fbfbfb; display: flex; flex-direction: column; align-items: center; }
.cal-app b { width: 36px; height: 12px; background: #ee4b50; color: #fff; font-size: 7px; line-height: 13px; text-align: center; }
.cal-app span { font-size: 22px; line-height: 23px; font-weight: 300; letter-spacing: -.3px; }
.tv-app { border-radius: 8px; background: #1b1e21; color: #fff; display: flex; align-items: center; justify-content: center; gap: 1px; font-size: 16px; font-weight: 500; }
.app > svg.apple { width: 11px; height: 13px; }
```
